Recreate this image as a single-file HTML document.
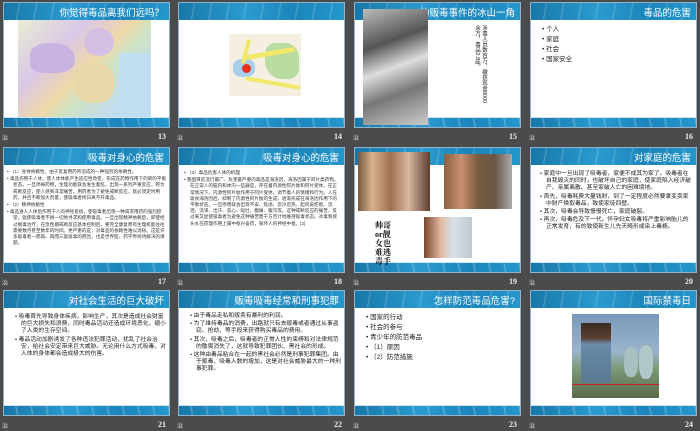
<!DOCTYPE html>
<html><head><meta charset="utf-8"><style>
*{margin:0;padding:0;box-sizing:border-box}
body{width:700px;height:431px;background:#4b4b4b;position:relative;overflow:hidden;font-family:"Liberation Sans","Noto Sans CJK SC",sans-serif}
.s{position:absolute;width:167px;height:126px;background:#fff;border:1px solid #8fb3c8;overflow:hidden}
.h{position:absolute;left:0;top:0;right:0;height:17px;background:linear-gradient(90deg,#1877a8,#2a9bd0 40%,#1b85bb 70%,#2497cc);}
.h:after{content:"";position:absolute;left:0;right:0;top:0;bottom:0;background:repeating-linear-gradient(100deg,rgba(255,255,255,0) 0 14px,rgba(255,255,255,.18) 15px,rgba(255,255,255,0) 17px)}
.f{position:absolute;left:0;right:0;bottom:0;height:10px;background:linear-gradient(90deg,#1877a8,#2a9bd0 40%,#1b85bb 70%,#2497cc);border-top:1px solid #cfe6f2}
.f:after{content:"";position:absolute;left:0;right:0;top:0;bottom:0;background:repeating-linear-gradient(80deg,rgba(255,255,255,0) 0 12px,rgba(255,255,255,.25) 13px,rgba(255,255,255,0) 15px)}
.t{position:absolute;right:5px;top:2px;color:#fff;font-size:9.5px;z-index:2;white-space:nowrap}
.n{position:absolute;color:#eee;font:bold 8px "Liberation Serif",serif}
.l{position:absolute;color:#ddd;font-size:6px}
.b{position:absolute;font-size:6.2px;line-height:7.6px;color:#222}
.b p{padding-left:7px;text-indent:-6px;margin-bottom:1px}
.b p:before{content:"• ";}
.sm{font-size:4.6px;line-height:6.2px;color:#333}
</style></head><body>

<!-- row 1 -->
<div class="s" style="left:3px;top:2px"><div class="h"></div><div class="t">你觉得毒品离我们远吗？</div>
<div style="position:absolute;left:14px;top:17px;width:133px;height:100px;background:linear-gradient(135deg,#e9ecd2 0,#d9c8e6 30%,#f0d8a8 50%,#cfe3c4 60%,#c3dcef 80%,#bfe0f2)"></div>
<div style="position:absolute;left:26px;top:40px;width:45px;height:30px;background:#c9b3e0;border-radius:40% 50% 40% 30%"></div>
<div style="position:absolute;left:80px;top:25px;width:30px;height:28px;background:#d4bfe5;border-radius:50%"></div>
<div style="position:absolute;left:70px;top:60px;width:40px;height:40px;background:#e8d8a8;border-radius:40%"></div>
<div style="position:absolute;left:115px;top:50px;width:32px;height:60px;background:#c0dff2"></div>
<div class="f"></div></div>
<div class="l" style="left:2px;top:133px">治</div><div class="n" style="left:158px;top:132px">13</div>

<div class="s" style="left:178px;top:2px"><div class="h"></div>
<div style="position:absolute;left:50px;top:31px;width:72px;height:62px;background:#f4efe0"></div>
<div style="position:absolute;left:86px;top:40px;width:34px;height:36px;background:#b9dca2;border-radius:30% 40% 30% 50%"></div>
<div style="position:absolute;left:54px;top:56px;width:22px;height:18px;background:#a8d0ec;border-radius:40%"></div>
<div style="position:absolute;left:63px;top:61px;width:9px;height:9px;background:#e83020;border-radius:50%"></div>
<div style="position:absolute;left:66px;top:48px;width:50px;height:5px;background:#f2e86a;transform:rotate(-10deg)"></div>
<div style="position:absolute;left:66px;top:78px;width:55px;height:4px;background:#f2e86a;transform:rotate(10deg)"></div>
<div style="position:absolute;left:65px;top:36px;width:4px;height:25px;background:#f2e86a;transform:rotate(15deg)"></div>
<div class="f"></div></div>
<div class="l" style="left:177px;top:133px">治</div><div class="n" style="left:334px;top:132px">14</div>

<div class="s" style="left:354px;top:2px"><div class="h"></div><div class="t">的贩毒事件的冰山一角</div>
<div style="position:absolute;left:8px;top:6px;width:65px;height:116px;background:linear-gradient(160deg,#bbb,#555 30%,#ddd 50%,#777 70%,#ccc);z-index:3"></div>
<div style="position:absolute;left:118px;top:22px;font-size:5.5px;line-height:7px;writing-mode:vertical-rl;color:#222;height:80px">涉毒人员数百万，缴获现金8000余万，毒品2.8吨</div>
<div class="f"></div></div>
<div class="l" style="left:353px;top:133px">治</div><div class="n" style="left:509px;top:132px">15</div>

<div class="s" style="left:530px;top:2px"><div class="h"></div><div class="t">毒品的危害</div>
<div class="b" style="left:10px;top:22px;font-size:6.5px;line-height:9px"><p>个人</p><p>家庭</p><p>社会</p><p>国家安全</p></div>
<div class="f"></div></div>
<div class="l" style="left:529px;top:133px">治</div><div class="n" style="left:685px;top:132px">16</div>

<!-- row 2 -->
<div class="s" style="left:3px;top:147px"><div class="h"></div><div class="t">吸毒对身心的危害</div>
<div class="b sm" style="left:2px;top:21px;width:163px"><p>（1）身体依赖性，由于反复用药所造成的一种强烈的依赖性。</p><p>毒品作用于人体，使人体体能产生适应性改变，形成在药物作用下的新的平衡状态。一旦停掉药物，生理功能就会发生紊乱，出现一系列严重反应，称为戒断反应，使人感到非常痛苦。用药者为了避免戒断反应，就必须定时用药，并且不断加大剂量，使吸毒者终日离不开毒品。</p><p>（2）精神依赖性</p><p>毒品进入人体后作用于人的神经系统，使吸毒者出现一种渴求用药的强烈欲望，驱使吸毒者不顾一切地寻求和使用毒品。一旦出现精神依赖后，即使经过脱毒治疗，在急性期戒断反应基本控制后，要完全康复原有生理机能往往需要数月甚至数年的时间。更严重的是，对毒品的依赖性难以消除。这是许多吸毒者一而再、再而三复吸毒的原因，也是世界医、药学界尚待解决的课题。</p></div>
<div class="f"></div></div>
<div class="l" style="left:2px;top:278px">治</div><div class="n" style="left:158px;top:277px">17</div>

<div class="s" style="left:178px;top:147px"><div class="h"></div><div class="t">吸毒对身心的危害</div>
<div class="b sm" style="left:4px;top:22px;width:158px"><p>（3）毒品危害人体的机理</p><p>我国目前流行最广、危害最严重的毒品是海洛因，海洛因属于阿片类药物。在正常人的脑内和体内一些器官，存在着内源性阿片肽和阿片受体。在正常情况下，内源性阿片肽作用于阿片受体，调节着人的情绪和行为。人在吸食海洛因后，抑制了内源性阿片肽的生成，逐渐形成在海洛因作用下的平衡状态，一旦停用就会出现不安、焦虑、忽冷忽热、起鸡皮疙瘩、流泪、流涕、出汗、恶心、呕吐、腹痛、腹泻等。这种戒断反应的痛苦，反过来又促使吸毒者为避免这种痛苦而千方百计地维持吸毒状态。冰毒和摇头丸在药理作用上属中枢兴奋药，毁坏人的神经中枢。[2]</p></div>
<div class="f"></div></div>
<div class="l" style="left:177px;top:278px">治</div><div class="n" style="left:334px;top:277px">18</div>

<div class="s" style="left:354px;top:147px"><div class="h"></div>
<div style="position:absolute;left:3px;top:4px;width:72px;height:59px;background:linear-gradient(90deg,#7a5a40,#d8b090 20%,#a07050 45%,#d8b8a0 70%,#5a4030);z-index:3"></div>
<div style="position:absolute;left:89px;top:6px;width:68px;height:55px;background:linear-gradient(90deg,#8a6040,#c89070 25%,#7a5a40 50%,#6a5848 75%,#aaa);z-index:3"></div>
<div style="position:absolute;left:69px;top:69px;width:48px;height:41px;background:linear-gradient(90deg,#7a4a30,#e0b8a0 35%,#d8e0e8 60%,#c0c8d0);z-index:3"></div>
<div style="position:absolute;left:20px;top:73px;font:bold 8px/9px 'Liberation Serif','Noto Serif CJK SC',serif;color:#111;z-index:4;width:26px">帅哥<br>or靓<br>女也<br>难逃<br>毒手</div>
<div class="f"></div></div>
<div class="l" style="left:353px;top:278px">治</div><div class="n" style="left:509px;top:277px">19</div>

<div class="s" style="left:530px;top:147px"><div class="h"></div><div class="t">对家庭的危害</div>
<div class="b" style="left:8px;top:23px;width:152px;font-size:5.8px;line-height:7.2px"><p>家庭中一旦出现了吸毒者，家便不成其为家了。吸毒者在自我毁灭的同时，也破坏自己的家庭，使家庭陷入经济破产、亲属离散、甚至家破人亡的困难境地。</p><p>首先，吸毒耗费大量钱财，到了一定程度必然要拿变卖家中财产换取毒品，致使家徒四壁。</p><p>其次，吸毒会导致慢慢死亡，家庭破裂。</p><p>再次，吸毒危及下一代。怀孕妇女吸毒将严重影响胎儿的正常发育，有的致使新生儿先天畸形或染上毒瘾。</p></div>
<div class="f"></div></div>
<div class="l" style="left:529px;top:278px">治</div><div class="n" style="left:685px;top:277px">20</div>

<!-- row 3 -->
<div class="s" style="left:3px;top:290px"><div class="h"></div><div class="t">对社会生活的巨大破坏</div>
<div class="b" style="left:10px;top:23px;width:152px;font-size:5.8px;line-height:7.2px"><p>吸毒首先导致身体疾病，影响生产，其次是造成社会财富的巨大损失和浪费，同时毒品活动还造成环境恶化，缩小了人类的生存空间。</p><p>毒品活动加剧诱发了各种违法犯罪活动，扰乱了社会治安，给社会安定带来巨大威胁。无论用什么方式吸毒，对人体的身体都会造成极大的伤害。</p></div>
<div class="f"></div></div>
<div class="l" style="left:2px;top:421px">治</div><div class="n" style="left:158px;top:420px">21</div>

<div class="s" style="left:178px;top:290px"><div class="h"></div><div class="t">贩毒吸毒经常和刑事犯罪</div>
<div class="b" style="left:10px;top:22px;width:152px;font-size:5.8px;line-height:7.2px"><p>由于毒品走私和贩卖有暴利的利润。</p><p>为了维持毒品的消费，出路就只有去贩毒或者通过从事盗窃、抢劫、等手段来获得购买毒品的费用。</p><p>其次，吸毒之后，吸毒者的正常人性的束缚和对法律规范的敬畏消失了，这就导致犯罪团伙、黑社会的形成。</p><p>这种由毒品粘合在一起的黑社会必然是刑事犯罪集团。由于贩毒、吸毒人数的增加，这是对社会威胁最大的一种刑事犯罪。</p></div>
<div class="f"></div></div>
<div class="l" style="left:177px;top:421px">治</div><div class="n" style="left:334px;top:420px">22</div>

<div class="s" style="left:354px;top:290px"><div class="h"></div><div class="t">怎样防范毒品危害?</div>
<div class="b" style="left:10px;top:22px;font-size:6.5px;line-height:9px"><p>国家的行动</p><p>社会的参与</p><p>青少年的防范毒品</p><p>（1）原因</p><p>（2）防范措施</p></div>
<div class="f"></div></div>
<div class="l" style="left:353px;top:421px">治</div><div class="n" style="left:509px;top:420px">23</div>

<div class="s" style="left:530px;top:290px"><div class="h"></div><div class="t">国际禁毒日</div>
<div style="position:absolute;left:41px;top:23px;width:87px;height:84px;background:linear-gradient(180deg,#7a98b8 0,#9ab4cc 45%,#7a9a78 65%,#5a6a4a)"></div>
<div style="position:absolute;left:50px;top:32px;width:30px;height:60px;background:linear-gradient(180deg,#3a2a20 0,#5a4030 25%,#6a8aa8 35%,#5a7890)"></div>
<div style="position:absolute;left:93px;top:56px;width:14px;height:30px;background:#a8c0c0;border-radius:40%"></div>
<div style="position:absolute;left:108px;top:54px;width:14px;height:34px;background:#b0c8c8;border-radius:40%"></div>
<div style="position:absolute;left:41px;top:93px;width:87px;height:1px;background:#d02020"></div>
<div class="f"></div></div>
<div class="l" style="left:529px;top:421px">治</div><div class="n" style="left:685px;top:420px">24</div>

</body></html>
